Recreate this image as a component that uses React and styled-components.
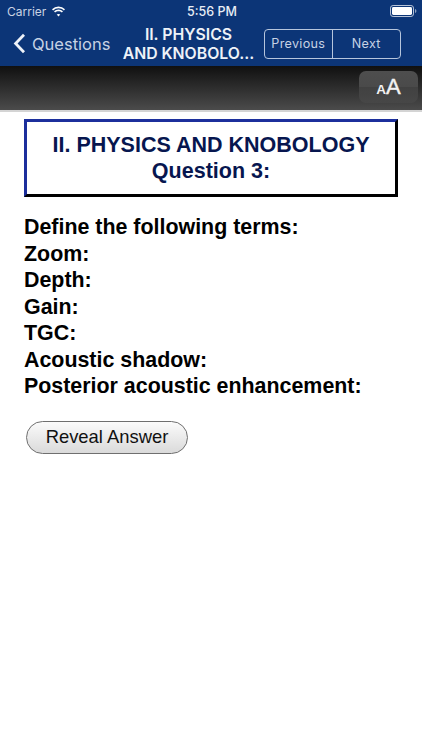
import React from "react";
import styled, { createGlobalStyle } from "styled-components";

const Global = createGlobalStyle`
  html, body { margin: 0; padding: 0; background: #fff; }
  body { width: 422px; height: 750px; overflow: hidden; font-family: "Liberation Sans", Arial, sans-serif; }
`;
const Page = styled.div`
  width: 422px; height: 750px; display: flex; flex-direction: column; background: #fff;
`;
const Header = styled.header`
  height: 66px; background: #0c3577; color: #fff; display: flex; flex-direction: column; flex: none;
`;
const StatusBar = styled.div`
  height: 22px; display: grid; grid-template-columns: 1fr auto 1fr; align-items: center; padding: 0 5px 0 7px;
  font-family: "Inter", "Liberation Sans", sans-serif; font-size: 12px; color: #e6ebf3;
`;
const StatusLeft = styled.div`
  display: flex; align-items: center; gap: 5px; font-size: 12px; color: #c9d3e3;
`;
const StatusTime = styled.div`
  font-weight: 500; color: #e8edf5; font-size: 12.5px;
`;
const StatusRight = styled.div`
  display: flex; justify-content: flex-end; align-items: center;
`;
const NavBar = styled.nav`
  flex: 1; display: flex; align-items: center; padding: 0 21px 0 13px;
`;
const BackLink = styled.div`
  display: flex; align-items: center; gap: 6px; width: 108px; flex: none; margin-top: -1px;
  font-family: "Inter", "Liberation Sans", sans-serif; font-size: 16.5px; color: #c6d2e4;
`;
const NavTitle = styled.div`
  flex: 1; text-align: center; font-family: "Inter", "Liberation Sans", sans-serif; font-weight: 600;
  font-size: 15.8px; line-height: 19px; color: #eef2f8; margin: 0 8px 0 0; white-space: nowrap;
`;
const Segments = styled.div`
  display: flex; width: 137px; height: 30px; box-sizing: border-box; flex: none; margin-top: -1px;
  border: 1px solid #b6c5dc; border-radius: 4px;
`;
const Segment = styled.div`
  display: flex; align-items: center; justify-content: center; flex: ${p => p.$grow};
  font-family: "Inter", "Liberation Sans", sans-serif; font-size: 12.6px; letter-spacing: 0.3px; color: #c6d2e4;
  & + & { border-left: 1px solid #b6c5dc; }
`;
const Toolbar = styled.div`
  box-sizing: border-box; height: 46px; flex: none; background: linear-gradient(#101010, #4b4b4b);
  border-bottom: 2px solid #d4d4d4; display: flex; justify-content: flex-end; align-items: flex-start;
  padding: 5px 4px 0 0;
`;
const FontButton = styled.div`
  width: 59px; height: 32px; border-radius: 7px;
  background: linear-gradient(#4e4e4e 0%, #4a4a4a 49%, #414141 50%, #474747 100%);
  display: flex; align-items: baseline; justify-content: center; color: #f2f2f2; font-weight: 700; padding-top: 3px; box-sizing: border-box;
  font-family: "Liberation Sans", sans-serif;
`;
const SmallA = styled.span` font-size: 13.5px; `;
const BigA = styled.span` font-size: 22px; font-weight: 400; -webkit-text-stroke: 0.4px #f2f2f2; `;
const Content = styled.main`
  padding: 7px 24px 0; display: flex; flex-direction: column; align-items: flex-start;
`;
const TitleBox = styled.div`
  box-sizing: border-box; width: 374px; height: 78px;
  border-style: solid; border-width: 3px;
  border-color: #1c2f9c #000 #000 #1c2f9c;
  display: flex; flex-direction: column; justify-content: center; align-items: center;
  color: #07164f; font-weight: 700; font-size: 21.5px; line-height: 26.5px; text-align: center;
`;
const Lines = styled.div`
  margin-top: 17px; color: #000; font-weight: 700; font-size: 21.4px; line-height: 26.5px;
`;
const Line = styled.div`white-space: nowrap;`;
const RevealButton = styled.button`
  margin: 21px 0 0 2px; width: 162px; height: 33px; box-sizing: border-box; border-radius: 17px; padding: 0;
  border: 1px solid #6f6f6f; background: linear-gradient(#fbfbfb, #dadada);
  font-family: "Liberation Sans", sans-serif; font-size: 18.4px; color: #111;
`;

const Wifi = () => (
  <svg width="15" height="11" viewBox="0 0 15 11" fill="#fff">
    <path d="M7.5 2.3c2.1 0 4 .8 5.4 2.2l1.1-1.2A9.2 9.2 0 0 0 7.5.6 9.2 9.2 0 0 0 1 3.3l1.1 1.2a7.7 7.7 0 0 1 5.4-2.2z" />
    <path d="M7.5 5.2c1.3 0 2.5.5 3.4 1.3L12 5.3a6.5 6.5 0 0 0-9 0l1.1 1.2c.9-.8 2.1-1.3 3.4-1.3z" />
    <path d="M7.5 7.9c-.7 0-1.3.3-1.8.7l1.8 1.9 1.8-1.9c-.5-.4-1.1-.7-1.8-.7z" />
  </svg>
);
const Battery = () => (
  <svg width="27" height="12" viewBox="0 0 27 12">
    <rect x="0.5" y="0.5" width="23" height="11" rx="2.6" fill="none" stroke="#b8c4d8" />
    <rect x="2" y="2" width="20" height="8" rx="1.4" fill="#fff" />
    <path d="M25 4v4c.8-.2 1.4-1 1.4-2s-.6-1.8-1.4-2z" fill="#8fa2c0" />
  </svg>
);
const Chevron = () => (
  <svg width="13" height="21" viewBox="0 0 13 21" fill="none">
    <path d="M11 1.8 2.6 10.5 11 19.2" stroke="#eef2f8" strokeWidth="2.8" />
  </svg>
);

export default function App() {
  return (
    <Page>
      <Global />
      <Header>
        <StatusBar>
          <StatusLeft>Carrier <Wifi /></StatusLeft>
          <StatusTime>5:56 PM</StatusTime>
          <StatusRight><Battery /></StatusRight>
        </StatusBar>
        <NavBar>
          <BackLink><Chevron />Questions</BackLink>
          <NavTitle>II. PHYSICS<br />AND KNOBOLO...</NavTitle>
          <Segments>
            <Segment $grow="68">Previous</Segment>
            <Segment $grow="69">Next</Segment>
          </Segments>
        </NavBar>
      </Header>
      <Toolbar>
        <FontButton><SmallA>A</SmallA><BigA>A</BigA></FontButton>
      </Toolbar>
      <Content>
        <TitleBox>
          <div>II. PHYSICS AND KNOBOLOGY</div>
          <div>Question 3:</div>
        </TitleBox>
        <Lines>
          <Line>Define the following terms:</Line>
          <Line>Zoom:</Line>
          <Line>Depth:</Line>
          <Line>Gain:</Line>
          <Line>TGC:</Line>
          <Line>Acoustic shadow:</Line>
          <Line>Posterior acoustic enhancement:</Line>
        </Lines>
        <RevealButton>Reveal Answer</RevealButton>
      </Content>
    </Page>
  );
}
